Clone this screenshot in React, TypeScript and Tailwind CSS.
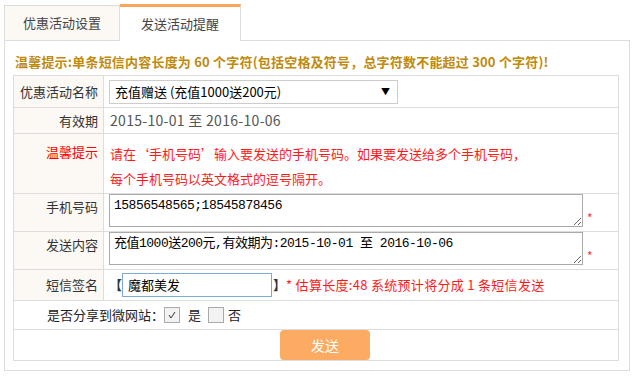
import React from "react"

const cjk = { fontFamily: '"Noto Sans CJK SC", "Liberation Sans", sans-serif' }
const mono = { fontFamily: '"Liberation Mono", "Noto Sans CJK SC", monospace' }

const Label = ({ children, red, top }: { children: React.ReactNode; red?: boolean; top?: string }) => (
  <div
    className={`w-[90px] shrink-0 bg-[#fcf8f3] border-r border-[#dddddd] text-right pr-[5px] ${top ?? "flex items-center justify-end"} ${red ? "text-[#ff0000]" : "text-[#333333]"}`}
  >
    {children}
  </div>
)

export default function App() {
  return (
    <div className="w-[637px] h-[380px] bg-white text-[13px] pl-[4px] pt-[3px]" style={cjk}>
      {/* tabs */}
      <div className="flex items-end h-[37px]">
        <div className="w-[116px] h-[35px] bg-[#fcf8f3] border border-b-0 border-[#dddddd] flex items-center justify-center text-[#444444]">
          优惠活动设置
        </div>
        <div className="w-[121px] h-[37px] bg-white border-t-[3px] border-t-[#fba55a] border-r border-[#dddddd] flex items-center justify-center text-[#444444] relative top-[1px]">
          发送活动提醒
        </div>
      </div>

      {/* panel */}
      <div className="w-[626px] h-[331px] border border-[#dddddd] pl-[8px] pt-[10px]">
        <div className="h-[22px] leading-[22px] pl-[2px] font-bold text-[#c08a0d] tracking-[0.2px]">
          温馨提示:单条短信内容长度为 60 个字符(包括空格及符号，总字符数不能超过 300 个字符)!
        </div>

        <div className="mt-[2px] w-[606px] border border-[#dddddd] flex flex-col">
          <div className="flex h-[32px] border-b border-[#dddddd]">
            <Label>优惠活动名称</Label>
            <div className="flex items-center pl-[5px]">
              <div className="w-[289px] h-[24px] border border-[#cccccc] flex items-center justify-between pl-[5px] pr-[7px] text-black">
                <span>充值赠送 (充值1000送200元)</span>
                <span className="text-[9px]">▼</span>
              </div>
            </div>
          </div>

          <div className="flex h-[26px] border-b border-[#dddddd]">
            <Label>有效期</Label>
            <div className="flex items-center pl-[6px] text-[#555555] text-[14px] tracking-[0.3px]">2015-10-01 至 2016-10-06</div>
          </div>

          <div className="flex h-[60px] border-b border-[#dddddd]">
            <Label red top="pt-[8px]">温馨提示</Label>
            <div className="pl-[6px] pt-[7px] text-[#ff1a1a] leading-[25px]">
              <div>请在‘手机号码’输入要发送的手机号码。如果要发送给多个手机号码，</div>
              <div>每个手机号码以英文格式的逗号隔开。</div>
            </div>
          </div>

          <div className="flex h-[38px] border-b border-[#dddddd]">
            <Label top="pt-[3px]">手机号码</Label>
            <div className="flex items-end pl-[5px] pt-[1px] pb-[4px]">
              <textarea
                className="w-[474px] h-[33px] border border-[#aaaaaa] px-[4px] py-[1px] text-[13px] tracking-[-0.5px] text-black outline-none resize-y"
                style={mono}
                defaultValue="15856548565;18545878456"
              />
              <span className="ml-[4px] text-[#ff3333] text-[12px] leading-none mb-[3px]">*</span>
            </div>
          </div>

          <div className="flex h-[38px] border-b border-[#dddddd]">
            <Label top="pt-[3px]">发送内容</Label>
            <div className="flex items-end pl-[5px] pt-[1px] pb-[4px]">
              <textarea
                className="w-[474px] h-[33px] border border-[#aaaaaa] px-[4px] py-[1px] text-[13px] tracking-[-0.5px] text-black outline-none resize-y"
                style={mono}
                defaultValue="充值1000送200元,有效期为:2015-10-01 至 2016-10-06"
              />
              <span className="ml-[4px] text-[#ff3333] text-[12px] leading-none mb-[3px]">*</span>
            </div>
          </div>

          <div className="flex h-[31px] border-b border-[#dddddd]">
            <Label>短信签名</Label>
            <div className="flex items-center pl-[5px]">
              <span className="text-[#333333] font-bold">【</span>
              <div className="w-[150px] h-[24px] border border-[#7fa9d6] flex items-center pl-[5px] text-black">魔都美发</div>
              <span className="text-[#333333] font-bold ml-[1px]">】</span>
              <span className="text-[#ff1a1a] text-[13px] tracking-[0.3px]">* 估算长度:48 系统预计将分成 1 条短信发送</span>
            </div>
          </div>

          <div className="flex h-[29px] border-b border-[#dddddd] items-center pl-[33px] text-[#222222]">
            <span>是否分享到微网站：</span>
            <span className="w-[16px] h-[16px] border border-[#aaaaaa] bg-[#f2f2f2] flex items-center justify-center">
              <svg width="10" height="10" viewBox="0 0 10 10">
                <path d="M2 5 L4 8 L8 2" fill="none" stroke="#333" strokeWidth="1" />
              </svg>
            </span>
            <span className="ml-[8px]">是</span>
            <span className="ml-[7px] w-[16px] h-[16px] border border-[#aaaaaa] bg-[#f2f2f2]"></span>
            <span className="ml-[4px]">否</span>
          </div>

          <div className="flex h-[30px] items-end">
            <div className="ml-[266px] w-[90px] h-[30px] bg-[#fdab63] rounded-[4px] text-white text-[14px] flex items-center justify-center">发送</div>
          </div>
        </div>
      </div>
    </div>
  )
}
